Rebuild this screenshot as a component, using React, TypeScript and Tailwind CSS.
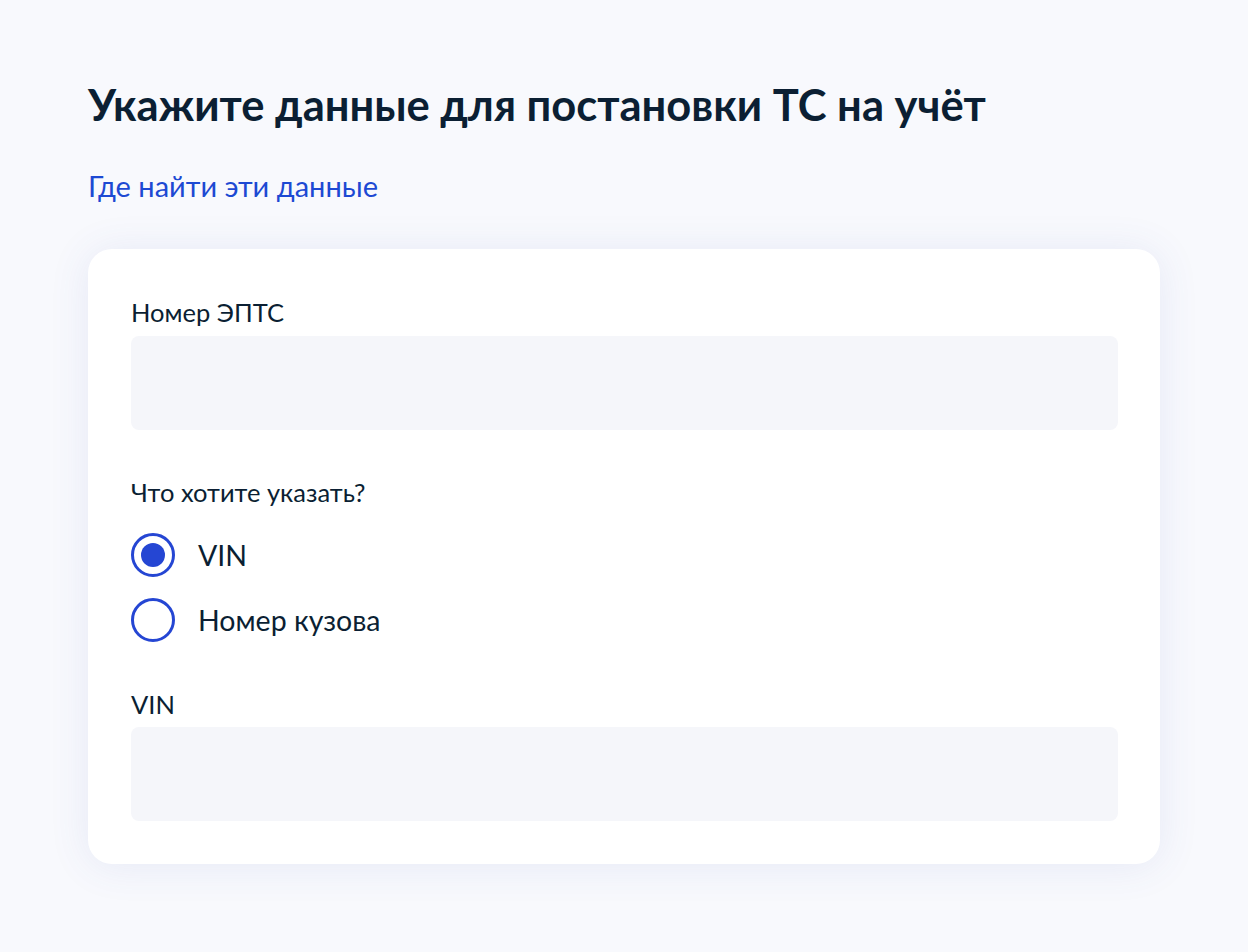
import React from "react";

function Radio({ checked, label }: { checked: boolean; label: string }) {
  return (
    <div className="flex items-center gap-[23px] h-[44px]">
      <div className="w-[44px] h-[44px] rounded-full border-[3px] border-[#2546d3] flex items-center justify-center bg-white">
        {checked && <div className="w-[24px] h-[24px] rounded-full bg-[#2546d3]" />}
      </div>
      <span className="text-[28.5px] text-[#0b1f33] leading-none">{label}</span>
    </div>
  );
}

export default function App() {
  return (
    <div
      className="min-h-[952px] w-full bg-[#f8f9fd] pl-[88px] pr-[88px] pt-[78px]"
      style={{ fontFamily: "Lato, 'Noto Sans', sans-serif" }}
    >
      <h1 className="text-[43.5px] font-bold text-[#0b1f33] leading-[52px]">
        Укажите данные для постановки ТС на учёт
      </h1>
      <div className="mt-[41px] text-[29px] text-[#1d49d3] leading-[30px]">Где найти эти данные</div>
      <div className="mt-[48px] w-[1072px] bg-white rounded-[24px] shadow-[0_2px_40px_rgba(66,88,180,0.10)] pl-[43px] pr-[42px] pt-[48px] pb-[43px]">
        <div className="text-[25.5px] text-[#0b1f33] leading-[30px]">Номер ЭПТС</div>
        <div className="mt-[9px] h-[94px] rounded-[8px] bg-[#f5f6fa]" />
        <div className="mt-[47px] text-[25.5px] text-[#0b1f33] leading-[30px]">Что хотите указать?</div>
        <div className="mt-[26px] flex flex-col gap-[21px]">
          <Radio checked label="VIN" />
          <Radio checked={false} label="Номер кузова" />
        </div>
        <div className="mt-[47px] text-[25.5px] text-[#0b1f33] leading-[30px]">VIN</div>
        <div className="mt-[8px] h-[94px] rounded-[8px] bg-[#f5f6fa]" />
      </div>
    </div>
  );
}
